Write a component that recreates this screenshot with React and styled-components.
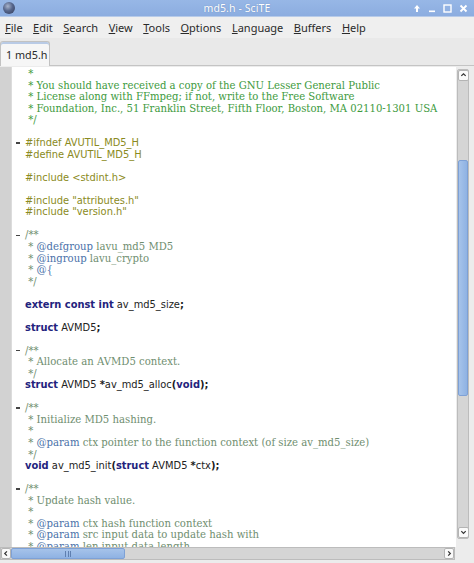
import styled, { createGlobalStyle, css } from 'styled-components'

const Global = createGlobalStyle`
  html, body {
    margin: 0;
    padding: 0;
    overflow: hidden;
    background: #ececec;
  }
  #root {
    width: 474px;
    height: 563px;
  }
`

const Window = styled.div`
  width: 474px;
  height: 563px;
  display: flex;
  flex-direction: column;
  background: #ececec;
  overflow: hidden;
`

const TitleBar = styled.div`
  height: 17px;
  flex: none;
  display: grid;
  grid-template-columns: 1fr auto 1fr;
  align-items: center;
  background: linear-gradient(#97b7e6, #8cade0);
  border-bottom: 1px solid #b7cbe9;
  box-sizing: border-box;
`

const AppIcon = styled.div`
  width: 12px;
  height: 12px;
  margin-left: 3px;
  border-radius: 50%;
  background: radial-gradient(circle at 40% 35%, #a8b4cc 0%, #56658a 45%, #2f3a58 100%);
`

const Title = styled.div`
  font-family: "Noto Sans", sans-serif;
  font-size: 10.5px;
  color: #ffffff;
  letter-spacing: 0.1px;
  text-shadow: 0 0 1px rgba(60, 90, 140, 0.5);
`

const WinControls = styled.div`
  display: flex;
  justify-content: flex-end;
  align-items: center;
  gap: 7px;
  padding-right: 6px;
  svg {
    display: block;
  }
`

const MenuBar = styled.div`
  height: 21px;
  flex: none;
  display: flex;
  align-items: center;
  background: #efefef;
`

const MenuItem = styled.div`
  font-family: "Noto Sans", sans-serif;
  font-size: 11px;
  color: #2a2a2a;
  white-space: nowrap;
  padding: 0 5.25px;
  &:first-child {
    padding-left: 5px;
  }
  u {
    text-decoration: underline;
    text-underline-offset: 1px;
  }
`

const TabBar = styled.div`
  height: 28px;
  flex: none;
  display: flex;
  align-items: flex-end;
  background: #e9e9e9;
  border-bottom: 1px solid #c4c4c4;
  box-sizing: border-box;
`

const Tab = styled.div`
  width: 50px;
  height: 25px;
  box-sizing: border-box;
  display: flex;
  align-items: center;
  padding-left: 5px;
  margin-bottom: -1px;
  white-space: nowrap;
  background: #f6f6f6;
  border: 1px solid #c2c2c2;
  border-bottom: none;
  border-radius: 3px 3px 0 0;
  box-shadow: inset 0 2px 0 #b9cbe6;
  font-family: "Noto Sans", sans-serif;
  font-size: 10.8px;
  color: #2a2a2a;
`

const Body = styled.div`
  flex: 1;
  display: flex;
  min-height: 0;
  padding-top: 1px;
`

const LeftColumn = styled.div`
  flex: 1;
  display: flex;
  flex-direction: column;
  min-width: 0;
`

const Editor = styled.div`
  flex: 1;
  display: flex;
  background: #ffffff;
  overflow: hidden;
  min-height: 0;
`

const SymbolMargin = styled.div`
  width: 12px;
  flex: none;
  background: #d2d2d2;
  border-right: 1px solid #dcdcdc;
  box-sizing: border-box;
`

const Lines = styled.div`
  flex: 1;
  display: flex;
  flex-direction: column;
  min-width: 0;
  padding-top: 1px;
`

const Line = styled.div`
  height: 11.54px;
  flex: none;
  display: flex;
  align-items: center;
  white-space: pre;
`

const FoldCell = styled.div`
  width: 13px;
  flex: none;
  display: flex;
  align-items: center;
  justify-content: center;
  padding-right: 1px;
  box-sizing: border-box;
`

const FoldMark = styled.span`
  width: 4px;
  height: 1.4px;
  background: #444444;
`

const sans = css`
  font-family: "DejaVu Sans", sans-serif;
  font-size: 9.9px;
`
const serif = css`
  font-family: "DejaVu Serif", serif;
  font-size: 10.1px;
`

const kinds = {
  c: css`${serif} color: #3d9a3d;`,
  d: css`${serif} color: #6f8e6f;`,
  k: css`${serif} color: #4a71a9;`,
  p: css`${sans} color: #8a8a22;`,
  w: css`${sans} color: #23237d; font-weight: bold;`,
  o: css`${sans} color: #1c1c1c; font-weight: bold;`,
  n: css`${sans} color: #222222;`,
}

const Token = styled.span`
  line-height: 11.54px;
  ${p => kinds[p.$kind]}
`

const RightColumn = styled.div`
  width: 12px;
  flex: none;
  margin: 2px 5px 0 1px;
  display: flex;
  flex-direction: column;
`

const VScroll = styled.div`
  height: 470px;
  display: flex;
  flex-direction: column;
  background: #d5d5d5;
  border: 1px solid #bcbcbc;
  border-radius: 2px;
  box-sizing: border-box;
`

const ArrowButton = styled.div`
  width: ${p => (p.$wide ? 10 : 11)}px;
  height: 11px;
  flex: none;
  display: flex;
  align-items: center;
  justify-content: center;
  background: #fafafa;
  border: 1px solid #b4b4b4;
  border-radius: 2px;
  box-sizing: border-box;
  margin: ${p => (p.$wide ? '0' : '0 auto')};
`

const Track = styled.div`
  flex: 1;
  display: flex;
  flex-direction: ${p => (p.$horizontal ? 'row' : 'column')};
  align-items: stretch;
`

const Thumb = styled.div`
  flex: none;
  background: linear-gradient(${p => (p.$horizontal ? '#a6c3ea, #8fb2e3' : '90deg, #a6c3ea, #8fb2e3')});
  border: 1px solid #7ea1d6;
  border-radius: 2px;
  box-sizing: border-box;
  display: flex;
  align-items: center;
  justify-content: center;
`

const Grip = styled.div`
  display: flex;
  gap: 1.5px;
  span {
    width: 1px;
    height: 6px;
    background: #5f7fb0;
  }
`

const HScroll = styled.div`
  height: 13px;
  flex: none;
  display: flex;
  align-items: stretch;
  margin-right: 1px;
  margin-bottom: 3px;
  background: #d5d5d5;
  border: 1px solid #bcbcbc;
  box-sizing: border-box;
`

const Chevron = ({ dir }) => {
  const paths = {
    up: 'M1.5 4.5 L4 2 L6.5 4.5',
    down: 'M1.5 2.5 L4 5 L6.5 2.5',
    left: 'M4.5 1.5 L2 4 L4.5 6.5',
    right: 'M2.5 1.5 L5 4 L2.5 6.5',
  }
  return (
    <svg width="7" height="7" viewBox="0 0 8 8">
      <path d={paths[dir]} fill="none" stroke="#333" strokeWidth="1.4" />
    </svg>
  )
}

const PinIcon = () => (
  <svg width="8" height="9" viewBox="0 0 8 9">
    <path d="M4 1 L7 4.5 L5 4.5 L5 8 L3 8 L3 4.5 L1 4.5 Z" fill="#fff" />
  </svg>
)
const MinIcon = () => (
  <svg width="8" height="9" viewBox="0 0 8 9">
    <rect x="1" y="6.5" width="6" height="1.6" fill="#fff" />
  </svg>
)
const MaxIcon = () => (
  <svg width="9" height="9" viewBox="0 0 9 9">
    <rect x="1" y="1" width="7" height="7" fill="none" stroke="#fff" strokeWidth="1.4" />
  </svg>
)
const CloseIcon = () => (
  <svg width="9" height="9" viewBox="0 0 9 9">
    <path d="M1.5 1.5 L7.5 7.5 M7.5 1.5 L1.5 7.5" stroke="#fff" strokeWidth="1.8" />
  </svg>
)

const menus = [
  ['F', 'ile'], ['E', 'dit'], ['S', 'earch'], ['V', 'iew'], ['T', 'ools'],
  ['O', 'ptions'], ['L', 'anguage'], ['B', 'uffers'], ['H', 'elp'],
]

// [fold, [kind, text], ...]
const code = [
  [0, ['c', ' *']],
  [0, ['c', ' * You should have received a copy of the GNU Lesser General Public']],
  [0, ['c', ' * License along with FFmpeg; if not, write to the Free Software']],
  [0, ['c', ' * Foundation, Inc., 51 Franklin Street, Fifth Floor, Boston, MA 02110-1301 USA']],
  [0, ['c', ' */']],
  [0],
  [1, ['p', '#ifndef AVUTIL_MD5_H']],
  [0, ['p', '#define AVUTIL_MD5_H']],
  [0],
  [0, ['p', '#include <stdint.h>']],
  [0],
  [0, ['p', '#include "attributes.h"']],
  [0, ['p', '#include "version.h"']],
  [0],
  [1, ['d', '/**']],
  [0, ['d', ' * '], ['k', '@defgroup'], ['d', ' lavu_md5 MD5']],
  [0, ['d', ' * '], ['k', '@ingroup'], ['d', ' lavu_crypto']],
  [0, ['d', ' * '], ['k', '@{']],
  [0, ['d', ' */']],
  [0],
  [0, ['w', 'extern const int'], ['n', ' av_md5_size'], ['o', ';']],
  [0],
  [0, ['w', 'struct'], ['n', ' AVMD5'], ['o', ';']],
  [0],
  [1, ['d', '/**']],
  [0, ['d', ' * Allocate an AVMD5 context.']],
  [0, ['d', ' */']],
  [0, ['w', 'struct'], ['n', ' AVMD5 '], ['o', '*'], ['n', 'av_md5_alloc'], ['o', '('], ['w', 'void'], ['o', ');']],
  [0],
  [1, ['d', '/**']],
  [0, ['d', ' * Initialize MD5 hashing.']],
  [0, ['d', ' *']],
  [0, ['d', ' * '], ['k', '@param'], ['d', ' ctx pointer to the function context (of size av_md5_size)']],
  [0, ['d', ' */']],
  [0, ['w', 'void'], ['n', ' av_md5_init'], ['o', '('], ['w', 'struct'], ['n', ' AVMD5 '], ['o', '*'], ['n', 'ctx'], ['o', ');']],
  [0],
  [1, ['d', '/**']],
  [0, ['d', ' * Update hash value.']],
  [0, ['d', ' *']],
  [0, ['d', ' * '], ['k', '@param'], ['d', ' ctx hash function context']],
  [0, ['d', ' * '], ['k', '@param'], ['d', ' src input data to update hash with']],
  [0, ['d', ' * '], ['k', '@param'], ['d', ' len input data length']],
  [0, ['d', ' */']],
]

const App = () => {
  return (
    <>
      <Global />
      <Window>
        <TitleBar>
          <AppIcon />
          <Title>md5.h - SciTE</Title>
          <WinControls>
            <PinIcon />
            <MinIcon />
            <MaxIcon />
            <CloseIcon />
          </WinControls>
        </TitleBar>
        <MenuBar>
          {menus.map(([first, rest]) => (
            <MenuItem key={first + rest}>
              <u>{first}</u>{rest}
            </MenuItem>
          ))}
        </MenuBar>
        <TabBar>
          <Tab>1 md5.h</Tab>
        </TabBar>
        <Body>
          <LeftColumn>
            <Editor>
              <SymbolMargin />
              <Lines>
                {code.map(([fold, ...tokens], i) => (
                  <Line key={i}>
                    <FoldCell>{fold ? <FoldMark /> : null}</FoldCell>
                    {tokens.length ? (
                      tokens.map(([kind, text], j) => (
                        <Token key={j} $kind={kind}>{text}</Token>
                      ))
                    ) : (
                      <Token $kind="n"> </Token>
                    )}
                  </Line>
                ))}
              </Lines>
            </Editor>
            <HScroll>
              <ArrowButton $wide><Chevron dir="left" /></ArrowButton>
              <Track $horizontal>
                <Thumb $horizontal style={{ width: 114 }}>
                  <Grip><span /><span /><span /></Grip>
                </Thumb>
              </Track>
              <ArrowButton $wide><Chevron dir="right" /></ArrowButton>
            </HScroll>
          </LeftColumn>
          <RightColumn>
            <VScroll>
              <ArrowButton><Chevron dir="up" /></ArrowButton>
              <Track>
                <div style={{ height: 79 }} />
                <Thumb style={{ height: 236 }} />
              </Track>
              <ArrowButton><Chevron dir="down" /></ArrowButton>
            </VScroll>
          </RightColumn>
        </Body>
      </Window>
    </>
  )
}

export default App
